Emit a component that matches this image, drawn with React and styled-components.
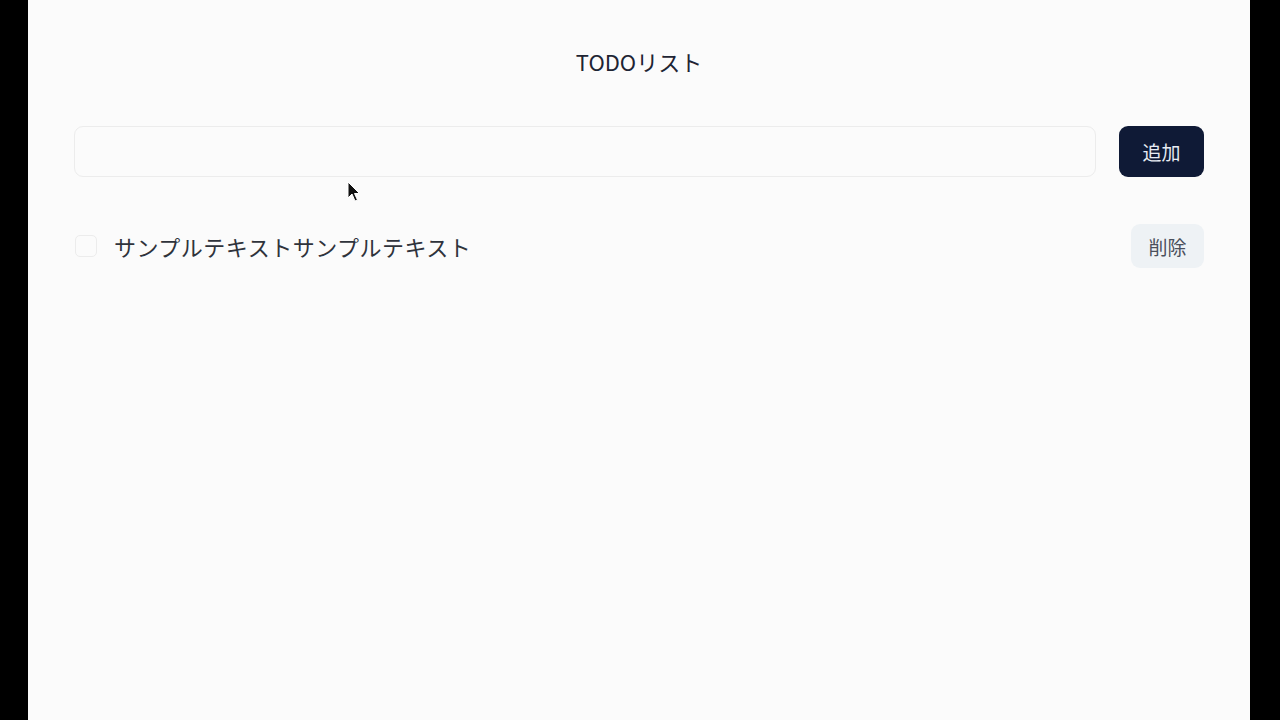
import React, { useState } from "react";
import styled, { createGlobalStyle } from "styled-components";

const GlobalStyle = createGlobalStyle`
  html, body {
    margin: 0;
    padding: 0;
    background: #000;
  }
  body {
    font-family: "Noto Sans CJK JP", "Noto Sans", sans-serif;
  }
`;

const Frame = styled.div`
  display: flex;
  justify-content: center;
  height: 720px;
  padding: 0 30px 0 28px;
  background: #000;
`;

const Page = styled.main`
  position: relative;
  flex: 1;
  background: #fbfbfb;
  padding: 43px 46px 0;
  box-sizing: border-box;
`;

const Title = styled.h1`
  margin: 0 0 46px;
  text-align: center;
  font-size: 22px;
  font-weight: 400;
  line-height: 37px;
  color: #1e2433;
`;

const Form = styled.form`
  display: flex;
  align-items: center;
  gap: 23px;
  margin-bottom: 47px;
`;

const TextInput = styled.input`
  flex: 1;
  height: 51px;
  box-sizing: border-box;
  border: 1px solid #ececec;
  border-radius: 9px;
  background: #fbfbfb;
  padding: 0 14px;
  font-size: 18px;
  font-family: inherit;
  outline: none;
`;

const Button = styled.button`
  border: none;
  border-radius: 9px;
  font-family: inherit;
  font-size: 19px;
  cursor: pointer;
  height: ${({ $small }) => ($small ? "44px" : "51px")};
  padding: ${({ $small }) => ($small ? "0 17.5px" : "0 23.5px")};
  background: ${({ $variant }) => ($variant === "dark" ? "#0f1a36" : "#eef2f5")};
  color: ${({ $variant }) => ($variant === "dark" ? "#e8ecf3" : "#4a505c")};
`;

const List = styled.ul`
  list-style: none;
  margin: 0;
  padding: 0;
`;

const Item = styled.li`
  display: flex;
  align-items: center;
  gap: 17px;
`;

const Check = styled.span`
  width: 22px;
  height: 22px;
  margin-left: 1px;
  box-sizing: border-box;
  border: 1px solid #ececec;
  border-radius: 5px;
  background: #fbfbfb;
`;

const ItemText = styled.span`
  flex: 1;
  font-size: 22px;
  color: #2f333b;
  letter-spacing: 0.5px;
`;

const Cursor = styled.svg`
  position: absolute;
  left: 319px;
  top: 181px;
  width: 14px;
  height: 22px;
`;

export default function App() {
  const [todos] = useState(["サンプルテキストサンプルテキスト"]);
  return (
    <>
      <GlobalStyle />
      <Frame>
        <Page>
          <Title>TODOリスト</Title>
          <Form onSubmit={(e) => e.preventDefault()}>
            <TextInput type="text" />
            <Button $variant="dark" type="submit">
              追加
            </Button>
          </Form>
          <List>
            {todos.map((t) => (
              <Item key={t}>
                <Check />
                <ItemText>{t}</ItemText>
                <Button $small>削除</Button>
              </Item>
            ))}
          </List>
          <Cursor viewBox="0 0 14 22">
            <path
              d="M1 1 L1 17 L5 13 L8 20 L10.5 19 L7.5 12.5 L12.5 12.5 Z"
              fill="#111"
              stroke="#fff"
              strokeWidth="1"
            />
          </Cursor>
        </Page>
      </Frame>
    </>
  );
}
